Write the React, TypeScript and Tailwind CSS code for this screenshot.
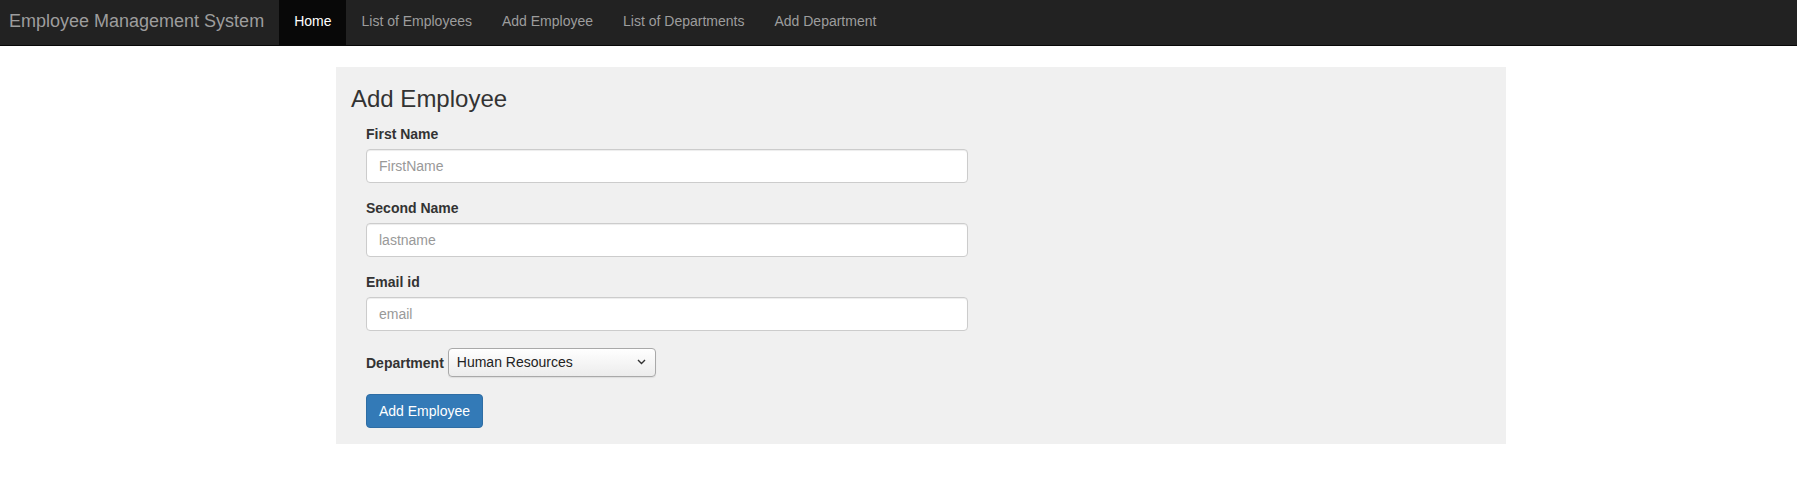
import React from "react";

const font = { fontFamily: '"Liberation Sans", Arial, Helvetica, sans-serif' };

function NavLink({ label, active }: { label: string; active?: boolean }) {
  return (
    <a
      href="#"
      className={
        active
          ? "block h-[45px] px-[15px] pt-[11px] text-[14px] leading-[20px] text-white bg-[#080808]"
          : "block h-[45px] px-[15px] pt-[11px] text-[14px] leading-[20px] text-[#9d9d9d]"
      }
    >
      {label}
    </a>
  );
}

function Field({ label, placeholder, mb }: { label: string; placeholder: string; mb: string }) {
  return (
    <div className={mb}>
      <label className="block text-[14px] leading-[20px] font-bold text-[#333] mb-[5px]">{label}</label>
      <input
        placeholder={placeholder}
        className="block w-[602px] h-[34px] px-[12px] text-[14px] text-[#555] bg-white border border-[#ccc] rounded-[4px] shadow-[inset_0_1px_1px_rgba(0,0,0,0.075)] placeholder:text-[#999] outline-none"
        style={font}
      />
    </div>
  );
}

export default function App() {
  return (
    <div className="w-[1797px] min-h-[501px] bg-white" style={font}>
      <nav className="h-[46px] bg-[#222] border-b border-[#080808] flex items-start">
        <a href="#" className="block h-[45px] pl-[9px] pr-[15px] pt-[11px] text-[18px] leading-[20px] text-[#9d9d9d]">
          Employee Management System
        </a>
        <NavLink label="Home" active />
        <NavLink label="List of Employees" />
        <NavLink label="Add Employee" />
        <NavLink label="List of Departments" />
        <NavLink label="Add Department" />
      </nav>

      <div className="ml-[336px] mt-[21px] w-[1170px] bg-[#f0f0f0] pt-[19px] pb-[16px] pl-[15px]">
        <h3 className="text-[24px] leading-[26px] text-[#333] mb-[12px]">Add Employee</h3>
        <div className="pl-[15px]">
          <Field label="First Name" placeholder="FirstName" mb="mb-[15px]" />
          <Field label="Second Name" placeholder="lastname" mb="mb-[15px]" />
          <Field label="Email id" placeholder="email" mb="mb-[17px]" />
          <div className="flex items-center h-[29px] mb-[17px]">
            <label className="text-[14px] leading-[20px] font-bold text-[#333] mr-[4px]">Department</label>
            <div className="relative">
              <select
                className="appearance-none w-[208px] h-[29px] pl-[8px] pr-[24px] text-[14px] text-[#222] border border-[#a9a9a9] rounded-[4px] bg-gradient-to-b from-[#ffffff] to-[#ececec] shadow-[0_1px_1px_rgba(0,0,0,0.08)] outline-none"
                style={font}
                defaultValue="hr"
              >
                <option value="hr">Human Resources</option>
              </select>
              <svg
                className="pointer-events-none absolute right-[10px] top-[11px]"
                width="9"
                height="6"
                viewBox="0 0 9 6"
              >
                <path d="M1 1 L4.5 4.5 L8 1" fill="none" stroke="#333" strokeWidth="1.4" />
              </svg>
            </div>
          </div>
          <button
            className="block w-[117px] h-[34px] text-[14px] text-white bg-[#337ab7] border border-[#2e6da4] rounded-[4px]"
            style={font}
          >
            Add Employee
          </button>
        </div>
      </div>
    </div>
  );
}
